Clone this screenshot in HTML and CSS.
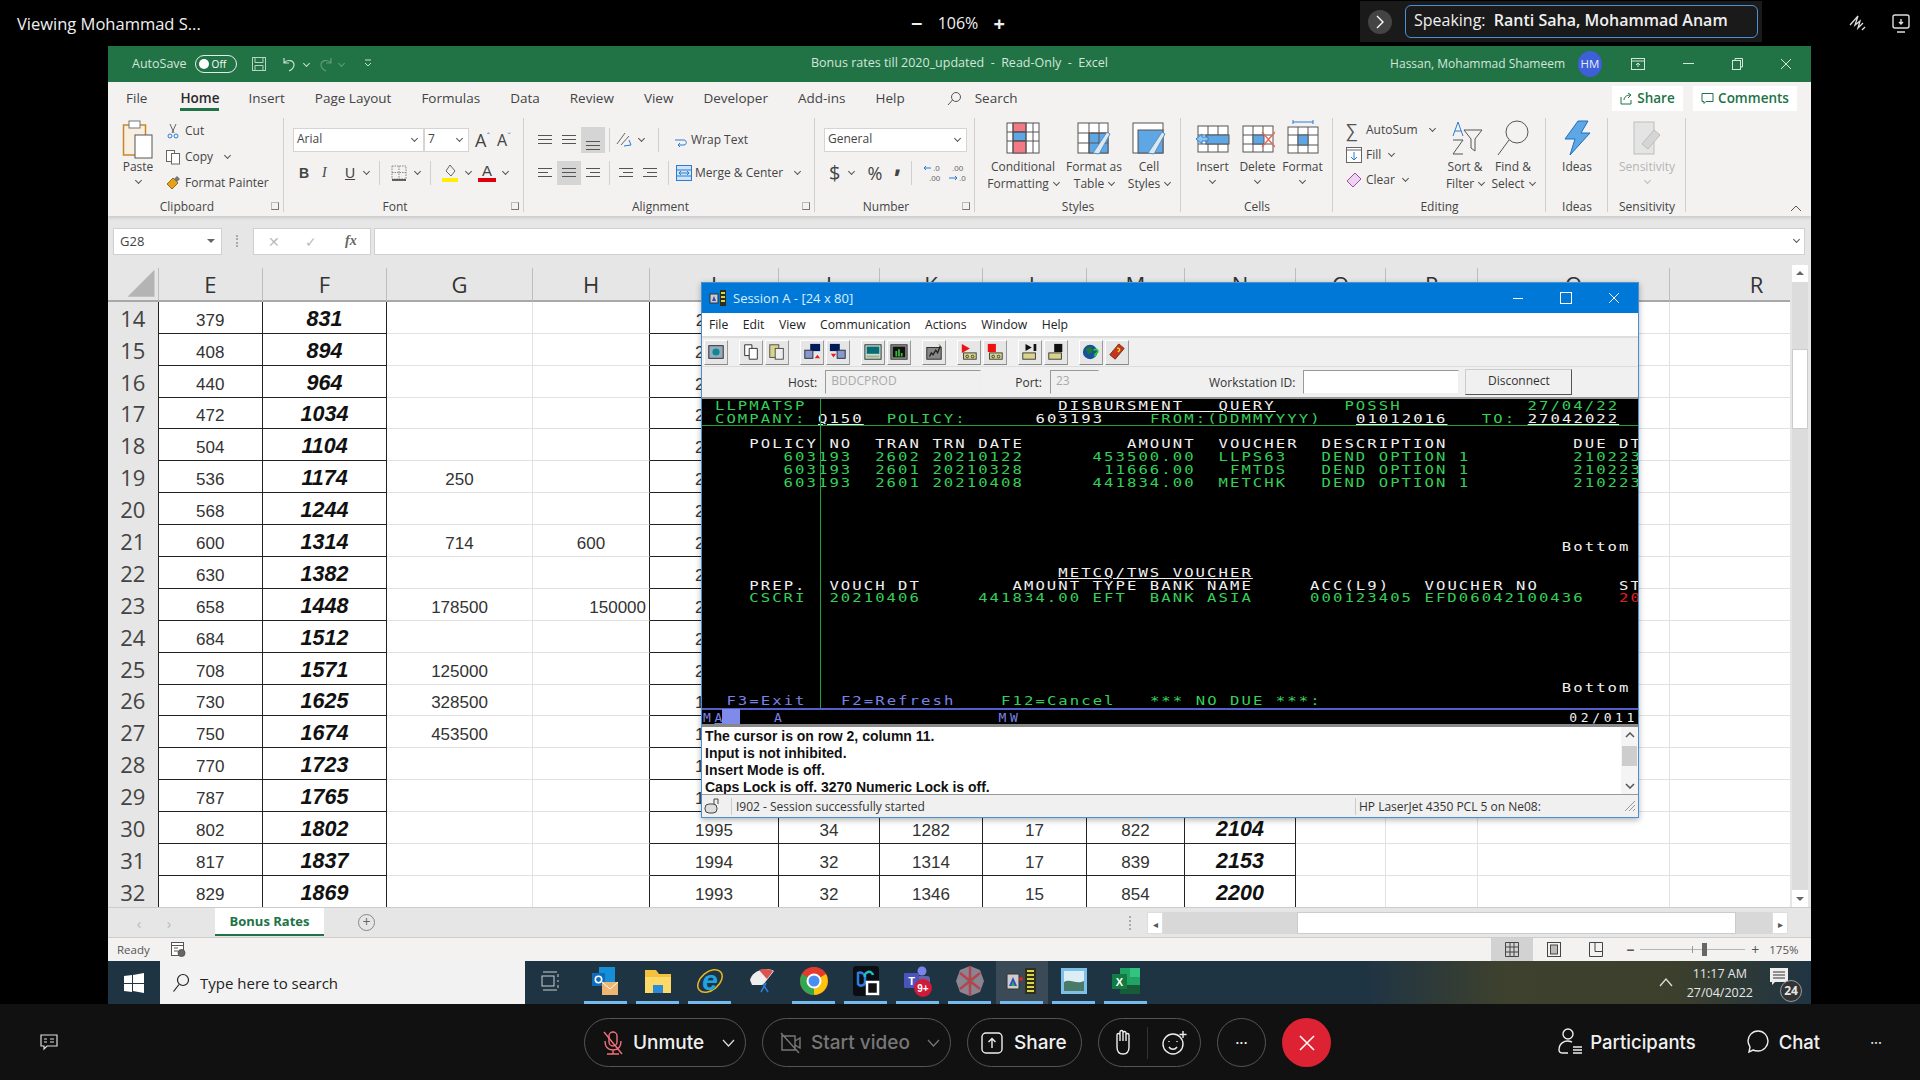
FILE: index.html
```html
<!DOCTYPE html>
<html lang="en">
<head>
  <meta charset="UTF-8" />
  <title>Meeting</title>
  <link rel="stylesheet" href="styles.css">
</head>
<body>
  <header class="top-bar">
    <div class="viewing">Viewing Mohammad S...</div>
    <div class="zoom-ctl"><span class="zoom-btn">−</span><span>106%</span><span class="zoom-btn">+</span></div>
    <div class="speaking">
      <span class="speak-arrow"><svg width="10" height="14" viewBox="0 0 10 14"><path d="M2 1l6 6-6 6" fill="none" stroke="#fff" stroke-width="1.4"/></svg></span>
      <div class="speak-box">Speaking:&nbsp; <b>Ranti Saha, Mohammad Anam</b></div>
    </div>
    <div class="top-icons">
      <svg width="22" height="22" viewBox="0 0 22 22" fill="none" stroke="#ddd" stroke-width="1.3"><path d="M3 13l8-9-3 9 5-4-2 7 5-5M15 18l3-3"/></svg>
      <svg width="20" height="22" viewBox="0 0 20 22" fill="none" stroke="#ddd" stroke-width="1.4"><rect x="2" y="3" width="16" height="13" rx="2"/><path d="M6 20h8M10 7v5M8 10l2 2 2-2"/></svg>
    </div>
  </header>

  <div class="stage">
    <main class="excel">
      <div class="title-bar">
        <div class="qat">
          <span>AutoSave</span>
          <span class="toggle"><i></i>Off</span>
          <svg width="16" height="16" viewBox="0 0 16 16" fill="none" stroke="#b5d3c1"><rect x="1.5" y="1.5" width="13" height="13"/><path d="M4 1.5v5h8v-5M4 14.500v-5h8v5"/></svg>
          <svg class="undo" width="16" height="16" viewBox="0 0 16 16" fill="none" stroke="#c9e0d2" stroke-width="1.2"><path d="M2 2v5h5M2 7c3-4 10-3 10 2 0 3-3 5-5 6"/></svg>
          <i class="chev light"></i>
          <svg class="redo" width="16" height="16" viewBox="0 0 16 16" fill="none" stroke="#5f9c78" stroke-width="1.2"><path d="M14 2v5H9M14 7c-3-4-10-3-10 2 0 3 3 5 5 6"/></svg>
          <i class="chev dim"></i>
          <svg class="custom" width="8" height="10" viewBox="0 0 8 10" fill="none" stroke="#c9e0d2"><path d="M1 1h6M1 4l3 3 3-3"/></svg>
        </div>
        <div class="doc-title">Bonus rates till 2020_updated&nbsp; -&nbsp; Read-Only&nbsp; -&nbsp; Excel</div>
        <div class="win-right">
          <span>Hassan, Mohammad Shameem</span>
          <span class="avatar">HM</span>
          <svg class="w-ribbon" width="14" height="12" viewBox="0 0 14 12" fill="none" stroke="#d5e6db"><rect x=".5" y=".5" width="13" height="11"/><path d="M1 3h12M7 9V5M5 7l2-2 2 2"/></svg>
          <span class="w-min"></span>
          <svg class="w-rest" width="11" height="12" viewBox="0 0 11 12" fill="none" stroke="#d5e6db"><rect x=".5" y="2.500" width="8" height="9"/><path d="M3 2V.5h7.500V9H9"/></svg>
          <svg class="w-close" width="12" height="12" viewBox="0 0 12 12" stroke="#d5e6db"><path d="M1 1l10 10M11 1L1 11"/></svg>
        </div>
      </div>

      <nav class="tabs">
        <span>File</span><span class="tab-on">Home</span><span>Insert</span><span>Page Layout</span><span>Formulas</span><span>Data</span><span>Review</span><span>View</span><span>Developer</span><span>Add-ins</span><span>Help</span>
        <span class="tab-search"><svg width="15" height="15" viewBox="0 0 15 15" fill="none" stroke="#555"><circle cx="9" cy="6" r="4.500"/><path d="M5.500 9L1 14"/></svg>Search</span>
        <span class="share-btns">
          <span class="share-btn"><svg width="13" height="13" viewBox="0 0 13 13" fill="none" stroke="#217346"><path d="M1 5v7h10V8M4 8c0-3 3-5 6-5M8 1l3 2-3 3"/></svg>Share</span>
          <span class="share-btn comments"><svg width="13" height="13" viewBox="0 0 13 13" fill="none" stroke="#217346"><path d="M1 1.500h11v8H5l-2 2v-2H1z"/></svg>Comments</span>
        </span>
      </nav>

      <section class="ribbon">
        <div class="group g-clip">
          <div class="body">
            <div class="big paste">
              <svg width="32" height="40" viewBox="0 0 32 40" fill="none"><rect x="1.500" y="6" width="22" height="30" fill="#f8efe0" stroke="#c8862c" stroke-width="1.500"/><rect x="7" y="2" width="11" height="7" fill="#fff" stroke="#777"/><rect x="13" y="16" width="17" height="23" fill="#fff" stroke="#555"/></svg>
              <span>Paste</span><i class="chev"></i>
            </div>
            <div class="rows">
              <div class="rb"><svg width="16" height="16" viewBox="0 0 16 16" fill="none" stroke="#666"><path d="M5 1l4 9M11 1L7 10"/><circle cx="5" cy="13" r="2" stroke="#2b7cd3"/><circle cx="11" cy="13" r="2" stroke="#2b7cd3"/></svg>Cut</div>
              <div class="rb"><svg width="16" height="16" viewBox="0 0 16 16" fill="#fff" stroke="#666"><rect x="1.500" y="1.500" width="8" height="11"/><rect x="6.500" y="4.500" width="8" height="10.500"/></svg>Copy<i class="chev"></i></div>
              <div class="rb"><svg width="16" height="16" viewBox="0 0 16 16"><path d="M2 9l6-6 5 5-6 6z" fill="#e3a21a" stroke="#9a6a10"/><path d="M9 4l3-3 3 3-3 3z" fill="#777"/></svg>Format Painter</div>
            </div>
          </div>
          <div class="label launched">Clipboard<i class="launch"></i></div>
        </div>

        <div class="group g-font">
          <div class="body">
            <div class="rows tight">
              <div class="line">
                <span class="combo c-font">Arial<i class="chev"></i></span><span class="combo c-size">7<i class="chev"></i></span>
                <span class="bigA">A<sup>ˆ</sup></span><span class="bigA small">A<sup>ˇ</sup></span>
              </div>
              <div class="line fmt">
                <b class="fi">B</b><em class="fi serif">I</em><u class="fi">U</u><i class="chev"></i>
                <span class="sep"></span>
                <svg class="fi" width="18" height="18" viewBox="0 0 18 18" fill="none" stroke="#888" stroke-dasharray="1.500 1"><rect x="2" y="2" width="14" height="13"/><path d="M9 2v13M2 8.500h14"/><path d="M2 16h14" stroke="#333" stroke-dasharray="0" stroke-width="1.500"/></svg><i class="chev"></i>
                <span class="sep"></span>
                <svg class="fi" width="18" height="20" viewBox="0 0 18 20"><path d="M9 2l5 6-4 5-5-5z" fill="none" stroke="#666"/><rect x="1" y="15" width="16" height="4" fill="#ffef00"/></svg><i class="chev"></i>
                <span class="colour"><span>A</span><i></i></span><i class="chev"></i>
              </div>
            </div>
          </div>
          <div class="label launched">Font<i class="launch"></i></div>
        </div>

        <div class="group g-align">
          <div class="body">
            <div class="rows tight">
              <div class="line">
                <span class="al"><s></s><s></s><s></s></span><span class="al"><s></s><s></s><s></s></span><span class="al on low"><s></s><s></s><s></s></span>
                <span class="sep"></span>
                <svg class="orient" width="20" height="20" viewBox="0 0 20 20" fill="none" stroke="#666"><path d="M3 14L11 3M7 15l8-9"/><path d="M10 16l7-1-2-5" stroke="#2b7cd3"/></svg><i class="chev"></i>
                <span class="sep s2"></span>
                <span class="wrap"><svg width="14" height="18" viewBox="0 0 14 18" fill="none" stroke="#2b7cd3"><path d="M1 9h9c3 0 3 5 0 5H4M6 12l-2 2 2 2"/></svg>Wrap Text</span>
              </div>
              <div class="line">
                <span class="al left"><s></s><s></s><s></s></span><span class="al on"><s></s><s></s><s></s></span><span class="al right"><s></s><s></s><s></s></span>
                <span class="sep"></span>
                <span class="al ind"><s></s><s></s><s></s></span><span class="al ind"><s></s><s></s><s></s></span>
                <span class="sep s3"></span>
                <span class="wrap"><svg width="16" height="18" viewBox="0 0 16 18" fill="#cfe3f6" stroke="#2b7cd3"><rect x=".5" y="1.500" width="15" height="15"/><path d="M.5 6h15M.5 12h15M3 9h10M3 9l2-2M3 9l2 2M13 9l-2-2M13 9l-2 2"/></svg>Merge &amp; Center<i class="chev"></i></span>
              </div>
            </div>
          </div>
          <div class="label launched">Alignment<i class="launch"></i></div>
        </div>

        <div class="group g-num">
          <div class="body">
            <div class="rows tight">
              <div class="line"><span class="combo c-gen">General<i class="chev"></i></span></div>
              <div class="line numfmt">
                <span class="sym">$</span><i class="chev"></i><span class="sym pct">%</span><span class="sym comma">,</span>
                <span class="sep"></span>
                <svg width="20" height="20" viewBox="0 0 20 20" fill="none" stroke="#2b7cd3"><path d="M8 5H1M3 3L1 5l2 2"/><text x="10" y="8" class="dec">.0</text><text x="6" y="18" class="dec">.00</text></svg>
                <svg width="20" height="20" viewBox="0 0 20 20" fill="none" stroke="#2b7cd3"><text x="4" y="8" class="dec">.00</text><path d="M1 15h8M7 13l2 2-2 2"/><text x="11" y="18" class="dec">.0</text></svg>
              </div>
            </div>
          </div>
          <div class="label launched">Number<i class="launch"></i></div>
        </div>

        <div class="group g-styles">
          <div class="body">
            <div class="big b-cond">
              <svg class="ic" width="34" height="36" viewBox="0 0 34 36" fill="#fff" stroke="#555"><rect x="1" y="3" width="32" height="30"/><rect x="7" y="3" width="13" height="9" fill="#f37a84"/><rect x="7" y="12" width="13" height="9" fill="#5ea6e4"/><rect x="7" y="21" width="13" height="12" fill="#f37a84"/><path d="M1 12h32M1 21h32M20 3v30M27 3v30M7 3v30" fill="none"/></svg>
              <span>Conditional</span><span class="sub">Formatting<i class="chev"></i></span>
            </div>
            <div class="big b-tbl">
              <svg class="ic" width="34" height="36" viewBox="0 0 34 36" fill="#fff" stroke="#555"><rect x="1" y="3" width="30" height="30"/><rect x="12" y="13" width="19" height="20" fill="#5ea6e4"/><path d="M1 13h30M1 23h30M12 3v30M22 3v30" fill="none"/><path d="M16 33L30 12l3 2-11 20z" fill="#d9e8f5" stroke="#5b8fb8"/></svg>
              <span>Format as</span><span class="sub">Table<i class="chev"></i></span>
            </div>
            <div class="big b-cell">
              <svg class="ic" width="34" height="36" viewBox="0 0 34 36" fill="#fff" stroke="#555"><rect x="1" y="3" width="30" height="30"/><rect x="6" y="10" width="25" height="23" fill="#5ea6e4"/><path d="M16 33L30 12l3 2-11 20z" fill="#d9e8f5" stroke="#5b8fb8"/></svg>
              <span>Cell</span><span class="sub">Styles<i class="chev"></i></span>
            </div>
          </div>
          <div class="label">Styles</div>
        </div>

        <div class="group g-cells">
          <div class="body">
            <div class="big">
              <svg class="ic" width="34" height="36" viewBox="0 0 34 36" fill="#fff" stroke="#555"><rect x="2" y="6" width="30" height="26"/><path d="M2 15h30M2 24h30M12 6v26M22 6v26" fill="none"/><rect x="10" y="15" width="23" height="9" fill="#5ea6e4"/><path d="M0 19l6-5v3h6v4H6v3z" fill="#8cc4f0" stroke="#2b7cd3"/></svg>
              <span>Insert</span><i class="chev"></i>
            </div>
            <div class="big">
              <svg class="ic" width="34" height="36" viewBox="0 0 34 36" fill="#fff" stroke="#555"><rect x="2" y="6" width="30" height="26"/><path d="M2 15h30M2 24h30M12 6v26M22 6v26" fill="none"/><rect x="12" y="15" width="11" height="9" fill="#5ea6e4"/><path d="M21 12l13 15M34 12L21 27" stroke="#e86a5d" stroke-width="1.500"/></svg>
              <span>Delete</span><i class="chev"></i>
            </div>
            <div class="big">
              <svg class="ic" width="34" height="36" viewBox="0 0 34 36" fill="#fff" stroke="#555"><path d="M7 2h20M7 0v4M27 0v4" stroke="#2b7cd3"/><rect x="2" y="7" width="30" height="26"/><path d="M2 15h30M2 25h30M12 7v26M22 7v26" fill="none"/><rect x="12" y="15" width="10" height="10" fill="#5ea6e4"/></svg>
              <span>Format</span><i class="chev"></i>
            </div>
          </div>
          <div class="label">Cells</div>
        </div>

        <div class="group g-edit">
          <div class="body">
            <div class="rows wide">
              <div class="rb"><span class="sum">∑</span>AutoSum<i class="chev"></i></div>
              <div class="rb"><svg width="16" height="18" viewBox="0 0 16 18" fill="#fff" stroke="#666"><rect x=".5" y="1.500" width="15" height="15"/><path d="M.5 4h15" fill="none"/><path d="M8 6v8M5 11l3 3 3-3" fill="none" stroke="#2b7cd3"/></svg>Fill<i class="chev"></i></div>
              <div class="rb"><svg width="16" height="18" viewBox="0 0 16 18" fill="#ecd4f0" stroke="#a24ab0"><path d="M1 10l8-8 6 6-8 8z"/></svg>Clear<i class="chev"></i></div>
            </div>
            <div class="big b-sort">
              <svg class="ic" width="36" height="36" viewBox="0 0 36 36" fill="none" stroke="#555"><path d="M11 2l-5 14M11 2l5 14M8 11h6" stroke="#2b7cd3"/><path d="M6 20h10L6 34h10"/><path d="M17 10h18l-7 9v12l-4-3v-9z"/></svg>
              <span>Sort &amp;</span><span class="sub">Filter<i class="chev"></i></span>
            </div>
            <div class="big b-find">
              <svg class="ic" width="36" height="38" viewBox="0 0 36 38" fill="none" stroke="#555"><circle cx="22" cy="13" r="11"/><path d="M14 21L3 36"/></svg>
              <span>Find &amp;</span><span class="sub">Select<i class="chev"></i></span>
            </div>
          </div>
          <div class="label">Editing</div>
        </div>

        <div class="group g-ideas">
          <div class="body">
            <div class="big">
              <svg class="ic" width="28" height="36" viewBox="0 0 28 36" fill="#5ea6e4" stroke="#1f6fc0"><path d="M15 1h10l-7 12h9L7 35l5-16H2z"/></svg>
              <span>Ideas</span>
            </div>
          </div>
          <div class="label">Ideas</div>
        </div>

        <div class="group g-sens">
          <div class="body">
            <div class="big muted">
              <svg class="ic" width="30" height="36" viewBox="0 0 30 36" fill="#e4e4e4" stroke="#bdbdbd"><rect x="2" y="2" width="20" height="32"/><path d="M10 24l12-14 6 5-12 14z" fill="#d5d5d5"/></svg>
              <span>Sensitivity</span><i class="chev"></i>
            </div>
          </div>
          <div class="label">Sensitivity</div>
        </div>
        <svg class="collapse" width="12" height="7" viewBox="0 0 12 7" fill="none" stroke="#555"><path d="M1 6l5-5 5 5"/></svg>
      </section>

      <div class="formula-bar">
        <div class="namebox">G28<span class="tri"></span></div>
        <span class="grip"></span>
        <div class="fx-btns"><span class="fx-x">✕</span><span class="fx-x">✓</span><em>fx</em></div>
        <div class="fx-input"><i class="chev"></i></div>
      </div>

      <div class="sheet">
        <div class="grid-wrap">
        <table class="grid">
          <colgroup>
            <col class="c0"><col class="c-e"><col class="c-f"><col class="c-g"><col class="c-h"><col class="c-i"><col class="c-j"><col class="c-k"><col class="c-l"><col class="c-m"><col class="c-n"><col class="c-o"><col class="c-p"><col class="c-q"><col class="c-r">
          </colgroup>
          <thead>
            <tr><th class="corner"><span></span></th><th>E</th><th>F</th><th>G</th><th>H</th><th>I</th><th>J</th><th>K</th><th>L</th><th>M</th><th>N</th><th>O</th><th>P</th><th>Q</th><th>R</th></tr>
          </thead>
          <tbody>
            <tr><th>14</th><td>379</td><td>831</td><td></td><td></td><td>2011</td><td></td><td></td><td></td><td></td><td></td><td></td><td></td><td></td><td></td></tr>
            <tr><th>15</th><td>408</td><td>894</td><td></td><td></td><td>2010</td><td></td><td></td><td></td><td></td><td></td><td></td><td></td><td></td><td></td></tr>
            <tr><th>16</th><td>440</td><td>964</td><td></td><td></td><td>2009</td><td></td><td></td><td></td><td></td><td></td><td></td><td></td><td></td><td></td></tr>
            <tr><th>17</th><td>472</td><td>1034</td><td></td><td></td><td>2008</td><td></td><td></td><td></td><td></td><td></td><td></td><td></td><td></td><td></td></tr>
            <tr><th>18</th><td>504</td><td>1104</td><td></td><td></td><td>2007</td><td></td><td></td><td></td><td></td><td></td><td></td><td></td><td></td><td></td></tr>
            <tr><th>19</th><td>536</td><td>1174</td><td>250</td><td></td><td>2006</td><td></td><td></td><td></td><td></td><td></td><td></td><td></td><td></td><td></td></tr>
            <tr><th>20</th><td>568</td><td>1244</td><td></td><td></td><td>2005</td><td></td><td></td><td></td><td></td><td></td><td></td><td></td><td></td><td></td></tr>
            <tr><th>21</th><td>600</td><td>1314</td><td>714</td><td>600</td><td>2004</td><td></td><td></td><td></td><td></td><td></td><td></td><td></td><td></td><td></td></tr>
            <tr><th>22</th><td>630</td><td>1382</td><td></td><td></td><td>2003</td><td></td><td></td><td></td><td></td><td></td><td></td><td></td><td></td><td></td></tr>
            <tr><th>23</th><td>658</td><td>1448</td><td>178500</td><td class="num-r">150000</td><td>2002</td><td></td><td></td><td></td><td></td><td></td><td></td><td></td><td></td><td></td></tr>
            <tr><th>24</th><td>684</td><td>1512</td><td></td><td></td><td>2001</td><td></td><td></td><td></td><td></td><td></td><td></td><td></td><td></td><td></td></tr>
            <tr><th>25</th><td>708</td><td>1571</td><td>125000</td><td></td><td>2000</td><td></td><td></td><td></td><td></td><td></td><td></td><td></td><td></td><td></td></tr>
            <tr><th>26</th><td>730</td><td>1625</td><td>328500</td><td></td><td>1999</td><td></td><td></td><td></td><td></td><td></td><td></td><td></td><td></td><td></td></tr>
            <tr><th>27</th><td>750</td><td>1674</td><td>453500</td><td></td><td>1998</td><td></td><td></td><td></td><td></td><td></td><td></td><td></td><td></td><td></td></tr>
            <tr><th>28</th><td>770</td><td>1723</td><td></td><td></td><td>1997</td><td></td><td></td><td></td><td></td><td></td><td></td><td></td><td></td><td></td></tr>
            <tr><th>29</th><td>787</td><td>1765</td><td></td><td></td><td>1996</td><td></td><td></td><td></td><td></td><td></td><td></td><td></td><td></td><td></td></tr>
            <tr><th>30</th><td>802</td><td>1802</td><td></td><td></td><td>1995</td><td>34</td><td>1282</td><td>17</td><td>822</td><td>2104</td><td></td><td></td><td></td><td></td></tr>
            <tr><th>31</th><td>817</td><td>1837</td><td></td><td></td><td>1994</td><td>32</td><td>1314</td><td>17</td><td>839</td><td>2153</td><td></td><td></td><td></td><td></td></tr>
            <tr><th>32</th><td>829</td><td>1869</td><td></td><td></td><td>1993</td><td>32</td><td>1346</td><td>15</td><td>854</td><td>2200</td><td></td><td></td><td></td><td></td></tr>
          </tbody>
        </table>
        </div>
        <div class="vscroll">
          <span class="sb-btn"><span class="up"></span></span>
          <span class="sb-track"><span class="sb-thumb"></span></span>
          <span class="sb-btn"><span class="down"></span></span>
        </div>
      </div>

      <div class="sheet-tabs">
        <span class="arrow">‹</span><span class="arrow">›</span>
        <span class="sheet-tab">Bonus Rates</span>
        <span class="add-sheet">+</span>
        <span class="dots"></span>
        <span class="hs-btn">◂</span>
        <span class="hs-track"><span class="hs-thumb"></span></span>
        <span class="hs-btn">▸</span>
      </div>

      <div class="status-bar">
        <span>Ready</span>
        <svg class="macro" width="15" height="16" viewBox="0 0 15 16" fill="#fff" stroke="#555"><rect x=".5" y=".5" width="12" height="13"/><path d="M.5 3.500h12M3 6h4M3 9h4" fill="none"/><circle cx="10.500" cy="11" r="3.500" fill="#666"/></svg>
        <span class="views">
          <span class="view on"><svg width="14" height="15" viewBox="0 0 14 15" fill="none" stroke="#444"><path d="M.5.5h13v14H.5zM5 .5v14M9 .5v14M.5 5h13M.5 10h13"/></svg></span>
          <span class="view"><svg width="14" height="15" viewBox="0 0 14 15" fill="none" stroke="#444"><rect x=".5" y=".5" width="13" height="14"/><rect x="3.500" y="3" width="7" height="9" fill="#bbb"/></svg></span>
          <span class="view"><svg width="14" height="15" viewBox="0 0 14 15" fill="none" stroke="#444"><path d="M.5.5h13v14H.5zM6 .5v9H13"/></svg></span>
        </span>
        <span class="zoom-minus">−</span>
        <span class="slider"><i class="tick"></i><i class="knob"></i></span>
        <span class="zoom-plus">+</span>
        <span class="pct-text">175%</span>
      </div>

      <div class="taskbar">
        <svg class="win-logo" width="20" height="20" viewBox="0 0 20 20" fill="#fff"><path d="M0 3l8-1v8H0zM9 2l11-2v10H9zM0 11h8v8l-8-1zM9 11h11v9l-11-2z"/></svg>
        <div class="search"><svg width="18" height="20" viewBox="0 0 18 20" fill="none" stroke="#222" stroke-width="1.200"><circle cx="11" cy="7" r="5.500"/><path d="M7 11.500L1.500 18.500"/></svg>Type here to search</div>
        <span class="slot"><svg width="20" height="22" viewBox="0 0 20 22" fill="none" stroke="#ccc"><path d="M3 2h14M3 20h14"/><rect x="2" y="6" width="12" height="10"/><path d="M18 4v3M18 10v2M18 15v3"/></svg></span>
        <span class="slot run"><svg width="30" height="32" viewBox="0 0 30 32"><rect x="8" y="2" width="16" height="18" fill="#1590d8"/><rect x="1" y="8" width="13" height="13" fill="#0f6cbd"/><circle cx="7.500" cy="14.500" r="3.200" fill="none" stroke="#fff" stroke-width="1.600"/><rect x="11" y="17" width="16" height="13" fill="#eeb672"/><path d="M11 17l8 7 8-7" fill="none" stroke="#fff"/></svg></span>
        <span class="slot run"><svg width="28" height="26" viewBox="0 0 28 26"><path d="M1 2h11l3 4h12v19H1z" fill="#f4c13e"/><path d="M1 9h26v16H1z" fill="#fcd968"/><rect x="9" y="17" width="10" height="8" fill="#2d8cd8"/></svg></span>
        <span class="slot run"><svg width="30" height="32" viewBox="0 0 30 32"><ellipse cx="15" cy="16" rx="14" ry="9" transform="rotate(-40 15 16)" fill="none" stroke="#e8b923" stroke-width="1.500"/><text x="15" y="25" text-anchor="middle" class="ie-e">e</text></svg></span>
        <span class="slot"><svg width="30" height="30" viewBox="0 0 30 30"><path d="M3 14C5 5 18 0 27 5L16 19 5 19z" fill="#eee"/><path d="M12 4c6-2 11-1 14 1L20 13z" fill="#d9534f"/><path d="M16 18l5 8M19 17l-5 9" stroke="#2b7cd3" stroke-width="1.600"/></svg></span>
        <span class="slot run"><svg width="28" height="28" viewBox="0 0 28 28"><circle cx="14" cy="14" r="14" fill="#e33b2e"/><path d="M14 14L2 7a14 14 0 0 1 24 0z" fill="#e33b2e"/><path d="M14 14l12-7a14 14 0 0 1-12 21z" fill="#f9c60d"/><path d="M14 14v14A14 14 0 0 1 2 7z" fill="#2fa84f"/><circle cx="14" cy="14" r="6.500" fill="#4a8df0" stroke="#fff" stroke-width="2"/></svg></span>
        <span class="slot run"><svg width="28" height="32" viewBox="0 0 28 32"><rect x="1" y="1" width="26" height="30" rx="3" fill="#0a0e12"/><path d="M6 8a5 5 0 0 1 7 4v6a4 4 0 0 1-7 1z" fill="none" stroke="#2a7de1" stroke-width="2.500"/><path d="M13 12a4 4 0 0 1 8-2" fill="none" stroke="#1fc0c8" stroke-width="2.500"/><rect x="15" y="17" width="11" height="12" fill="#111" stroke="#fff" stroke-width="2.500"/></svg></span>
        <span class="slot run teams"><svg width="30" height="32" viewBox="0 0 30 32"><circle cx="19" cy="6" r="4.500" fill="#7b83eb"/><rect x="12" y="11" width="15" height="13" rx="3" fill="#6264a7"/><rect x="1" y="8" width="15" height="15" rx="1" fill="#4b53bc"/><text x="8.500" y="20" text-anchor="middle" class="t-t">T</text><circle cx="20" cy="23" r="9" fill="#d01a39"/><text x="20" y="27" text-anchor="middle" class="t-n">9+</text></svg></span>
        <span class="slot run"><svg width="30" height="32" viewBox="0 0 30 32"><path d="M15 1l10 4 4 11-4 11-10 4-10-4-4-11 4-11z" fill="#8a8590"/><circle cx="15" cy="16" r="5" fill="#5d9a80"/><path d="M5 8l20 16M25 8L5 24M15 1v30" stroke="#b8434f" stroke-width="2.500"/></svg></span>
        <span class="slot run active"><svg width="32" height="28" viewBox="0 0 32 28"><rect x="1" y="7" width="12" height="15" rx="1" fill="#ccc" stroke="#333"/><path d="M3 19l4-9 4 9z" fill="#3547c8"/><path d="M5 19l2-5 2 5z" fill="#2fa84f"/><circle cx="15" cy="12" r="2" fill="#d22"/><rect x="19" y="1" width="11" height="26" fill="#2e2e1a"/><path d="M21 4h7M21 8h7M21 12h7M21 16h7M21 20h7M21 24h7" stroke="#d7d54a" stroke-width="2"/></svg></span>
        <span class="slot run"><svg width="28" height="28" viewBox="0 0 28 28"><rect x="1" y="1" width="26" height="26" fill="#7dc0ea"/><rect x="4" y="4" width="20" height="20" fill="#dceef3"/><path d="M4 15c6-4 12 3 20-1v10H4z" fill="#4a7a6a"/></svg></span>
        <span class="slot run"><svg width="30" height="28" viewBox="0 0 30 28"><rect x="9" y="1" width="20" height="26" fill="#21a366"/><rect x="19" y="1" width="10" height="9" fill="#33c481"/><rect x="9" y="18" width="20" height="9" fill="#185c37"/><rect x="1" y="7" width="15" height="15" fill="#107c41"/><text x="8.500" y="19" text-anchor="middle" class="t-t">X</text></svg></span>
        <span class="tray">
          <svg width="14" height="9" viewBox="0 0 14 9" fill="none" stroke="#ddd" stroke-width="1.300"><path d="M1 8l6-7 6 7"/></svg>
          <span class="clock"><span>11:17 AM</span><span>27/04/2022</span></span>
          <span class="notify"><svg width="20" height="20" viewBox="0 0 20 20" fill="#eee"><path d="M1 1h18v14H6l-3 3v-3H1z"/><path d="M4 5h12M4 8h12M4 11h12" stroke="#333"/></svg><b>24</b></span>
        </span>
      </div>

      <!-- floating terminal window -->
      <section class="session">
        <div class="s-title">
          <svg width="18" height="18" viewBox="0 0 18 18"><rect x="1" y="5" width="8" height="9" fill="#ccc" stroke="#333"/><path d="M3 12l2-5 2 5z" fill="#3547c8"/><rect x="11" y="1" width="6" height="16" fill="#2e2e1a"/><path d="M12 4h4M12 8h4M12 12h4" stroke="#d7d54a" stroke-width="2"/></svg>
          <span>Session A - [24 x 80]</span>
          <span class="s-ctl">
            <svg width="12" height="12" viewBox="0 0 12 12" stroke="#fff"><path d="M1 6.500h10"/></svg>
            <svg width="12" height="12" viewBox="0 0 12 12" fill="none" stroke="#fff"><rect x=".5" y=".5" width="11" height="11"/></svg>
            <svg width="12" height="12" viewBox="0 0 12 12" stroke="#fff"><path d="M1 1l10 10M11 1L1 11"/></svg>
          </span>
        </div>
        <div class="s-menu"><span>File</span><span>Edit</span><span>View</span><span>Communication</span><span>Actions</span><span>Window</span><span>Help</span></div>
        <div class="s-tools">
          <span class="tb"><svg viewBox="0 0 20 20"><rect x="2" y="3" width="16" height="14" fill="#9ab" stroke="#222"/><circle cx="10" cy="10" r="4" fill="#0a8a96"/></svg></span>
          <span class="tb-gap"></span>
          <span class="tb"><svg viewBox="0 0 20 20" fill="#fff" stroke="#222"><path d="M3 2h8v12H3z"/><path d="M8 6h9v12H8z"/></svg></span>
          <span class="tb"><svg viewBox="0 0 20 20" stroke="#444"><rect x="2" y="2" width="10" height="14" fill="#d9d48a"/><rect x="8" y="6" width="9" height="12" fill="#eee"/></svg></span>
          <span class="tb-gap"></span>
          <span class="tb"><svg viewBox="0 0 20 20"><rect x="8" y="1" width="11" height="8" fill="#001a5c"/><rect x="2" y="8" width="9" height="9" fill="#8899cc" stroke="#223"/><path d="M13 17l3-4 3 4z" fill="#d22"/></svg></span>
          <span class="tb"><svg viewBox="0 0 20 20"><rect x="1" y="1" width="11" height="8" fill="#001a5c"/><rect x="9" y="8" width="9" height="9" fill="#8899cc" stroke="#223"/><path d="M2 12l3 4 3-4z" fill="#d22"/></svg></span>
          <span class="tb-gap"></span>
          <span class="tb"><svg viewBox="0 0 20 20"><rect x="1" y="2" width="18" height="16" fill="#bfe0d0" stroke="#222"/><rect x="3" y="4" width="14" height="8" fill="#0a6a76"/><path d="M3 15h14" stroke="#aa8" stroke-width="2"/></svg></span>
          <span class="tb"><svg viewBox="0 0 20 20"><rect x="1" y="2" width="18" height="16" fill="#999" stroke="#222"/><rect x="3" y="4" width="14" height="12" fill="#111"/><path d="M7 15v-6M10 15V7M13 15v-4" stroke="#3b3" stroke-width="2"/></svg></span>
          <span class="tb-gap"></span>
          <span class="tb"><svg viewBox="0 0 20 20"><rect x="2" y="5" width="16" height="13" fill="#888" stroke="#222"/><path d="M5 15l2-4 2 2 3-5 2 3 3-8" fill="none" stroke="#222" stroke-width="1.500"/><path d="M15 1l3 3" stroke="#b84"/></svg></span>
          <span class="tb-gap"></span>
          <span class="tb"><svg viewBox="0 0 20 20"><path d="M2 1l9 5-9 5z" fill="#e11"/><rect x="4" y="11" width="14" height="7" fill="#d9d48a" stroke="#333"/><circle cx="8" cy="15" r="1.500" fill="none" stroke="#333"/><circle cx="14" cy="15" r="1.500" fill="none" stroke="#333"/></svg></span>
          <span class="tb"><svg viewBox="0 0 20 20"><rect x="2" y="1" width="9" height="9" fill="#e11"/><rect x="4" y="11" width="14" height="7" fill="#d9d48a" stroke="#333"/><circle cx="8" cy="15" r="1.500" fill="none" stroke="#333"/><circle cx="14" cy="15" r="1.500" fill="none" stroke="#333"/></svg></span>
          <span class="tb-gap"></span>
          <span class="tb"><svg viewBox="0 0 20 20"><path d="M5 1l7 4-7 4zM14 1h3v8h-3z" fill="#111"/><rect x="2" y="11" width="14" height="7" fill="#d9d48a" stroke="#333"/></svg></span>
          <span class="tb"><svg viewBox="0 0 20 20"><rect x="8" y="1" width="9" height="9" fill="#111"/><rect x="2" y="11" width="14" height="7" fill="#d9d48a" stroke="#333"/></svg></span>
          <span class="tb-gap"></span>
          <span class="tb"><svg viewBox="0 0 20 20"><circle cx="9" cy="10" r="8" fill="#1a4f9a"/><path d="M4 6l6-2 2 5-5 4z" fill="#1a7a3a"/><path d="M13 8c4-3 7 2 2 4l-1 3" fill="none" stroke="#2c3" stroke-width="2"/></svg></span>
          <span class="tb"><svg viewBox="0 0 20 20"><path d="M2 13L12 1l6 5L8 18z" fill="#c8341f" stroke="#631"/><path d="M10 6a2 2 0 0 1 3 2l-2 2" fill="none" stroke="#fd3" stroke-width="1.500"/></svg></span>
        </div>
        <div class="s-host">
          <label class="lbl-host">Host:</label><span class="field f-host">BDDCPROD</span>
          <label class="lbl-port">Port:</label><span class="field f-port">23</span>
          <label class="lbl-ws">Workstation ID:</label><span class="field f-ws"></span>
          <span class="disconnect">Disconnect</span>
        </div>
        <div class="term">
          <pre class="screen"><span class="g">LLPMATSP</span>                      <u class="w">DISBURSMENT   QUERY</u>      <span class="g">POSSH</span>           <span class="g">27/04/22</span>
<span class="g">COMPANY:</span> <u class="w">Q150</u>  <span class="g">POLICY:</span>      <span class="w">603193</span>    <span class="g">FROM:(DDMMYYYY)</span>   <u class="w">01012016</u>   <span class="g">TO:</span> <u class="w">27042022</u>

   <span class="w">POLICY NO  TRAN TRN DATE         AMOUNT  VOUCHER  DESCRIPTION           DUE DT</span>
<span class="g">      603193  2602 20210122      453500.00  LLPS63   DEND OPTION 1         210223</span>
<span class="g">      603193  2601 20210328       11666.00   FMTDS   DEND OPTION 1         210223</span>
<span class="g">      603193  2601 20210408      441834.00  METCHK   DEND OPTION 1         210223</span>




                                                                          <span class="w">Bottom</span>

                              <u class="w">METCQ/TWS VOUCHER</u>
   <span class="w">PREP.  VOUCH DT        AMOUNT TYPE BANK NAME     ACC(L9)   VOUCHER NO       ST</span>
<span class="g">   CSCRI  20210406     441834.00 EFT  BANK ASIA     000123405 EFD06042100436</span>   <span class="r">20</span>






                                                                          <span class="w">Bottom</span>
 <span class="b">F3=Exit</span>   <span class="b">F2=Refresh</span>    <span class="g">F12=Cancel</span>   <span class="g">*** NO DUE ***:</span></pre>
          <i class="cross-v"></i><i class="cross-h"></i>
        </div>
        <div class="oia">
          <span class="ma">M<u>A</u><i></i></span><span class="oia-a">A</span><span class="oia-mw">MW</span><span class="oia-pos">02/011</span>
        </div>
        <div class="log">
          <div class="log-text">
            <div>The cursor is on row 2, column 11.</div>
            <div>Input is not inhibited.</div>
            <div>Insert Mode is off.</div>
            <div>Caps Lock is off. 3270 Numeric Lock is off.</div>
          </div>
          <div class="log-scroll">
            <svg width="10" height="6" viewBox="0 0 10 6" fill="none" stroke="#555" stroke-width="1.500"><path d="M1 5l4-4 4 4"/></svg>
            <i></i>
            <svg width="10" height="6" viewBox="0 0 10 6" fill="none" stroke="#555" stroke-width="1.500"><path d="M1 1l4 4 4-4"/></svg>
          </div>
        </div>
        <div class="s-status">
          <svg width="24" height="18" viewBox="0 0 24 18" fill="#ddd" stroke="#444"><rect x="2" y="7" width="12" height="9" rx="4"/><path d="M11 7V2h4v5" fill="none"/></svg>
          <span class="st-msg">I902 - Session successfully started</span>
          <span class="st-print">HP LaserJet 4350 PCL 5 on Ne08:</span>
          <svg class="grip-r" width="12" height="12" viewBox="0 0 12 12" stroke="#999"><path d="M1 11L11 1M5 11l6-6M9 11l2-2"/></svg>
        </div>
      </section>
    </main>
  </div>

  <footer class="meeting">
    <svg class="cc" width="20" height="18" viewBox="0 0 20 18" fill="none" stroke="#ddd" stroke-width="1.200"><path d="M2 2h16v11H8l-3 3v-3H2z"/><path d="M5 6h3M5 9h3M11 6h4M11 9h4"/></svg>
    <div class="controls">
      <button class="pill unmute"><svg width="24" height="28" viewBox="0 0 24 28" fill="none" stroke="#f2707c" stroke-width="1.400"><rect x="8" y="3" width="8" height="14" rx="4"/><path d="M4 12c0 6 3 9 8 9s8-3 8-9M12 21v4M6 25h12M3 3l18 22"/></svg>Unmute<svg class="drop" width="13" height="8" viewBox="0 0 13 8" fill="none" stroke="#ddd" stroke-width="1.200"><path d="M1 1l5.500 6L12 1"/></svg></button>
      <button class="pill video"><svg width="24" height="24" viewBox="0 0 24 24" fill="none" stroke="#777" stroke-width="1.400"><path d="M3 5h13v14H3zM16 10l5-3v10l-5-3M2 2l18 20"/></svg>Start video<svg class="drop" width="13" height="8" viewBox="0 0 13 8" fill="none" stroke="#777" stroke-width="1.200"><path d="M1 1l5.500 6L12 1"/></svg></button>
      <button class="pill share"><svg width="22" height="22" viewBox="0 0 22 22" fill="none" stroke="#eee" stroke-width="1.400"><rect x="1" y="1" width="20" height="20" rx="4"/><path d="M11 16V7M7.500 10L11 6.500l3.500 3.500"/></svg>Share</button>
      <div class="pill react">
        <svg width="22" height="28" viewBox="0 0 22 28" fill="none" stroke="#eee" stroke-width="1.400"><path d="M5 13V6a1.500 1.500 0 0 1 3 0v6-9a1.500 1.500 0 0 1 3 0v9-8a1.500 1.500 0 0 1 3 0v8-6a1.500 1.500 0 0 1 3 0v12c0 4-2 7-6 7s-6-3-6-7z"/></svg>
        <span class="divider"></span>
        <svg width="26" height="28" viewBox="0 0 26 28" fill="none" stroke="#eee" stroke-width="1.400"><circle cx="12" cy="15" r="10"/><path d="M8 18c2 3 6 3 8 0M8 12v1M16 12v1M22 2v7M18.500 5.500h7"/></svg>
      </div>
      <button class="pill more">···</button>
      <button class="hangup"><svg width="18" height="18" viewBox="0 0 18 18" stroke="#fff" stroke-width="1.500"><path d="M2 2l14 14M16 2L2 16"/></svg></button>
    </div>
    <div class="side-btns">
      <span class="side"><svg width="26" height="30" viewBox="0 0 26 30" fill="none" stroke="#eee" stroke-width="1.400"><circle cx="11" cy="7" r="5"/><path d="M15 15c-8-3-13 2-13 8 0 2 2 3 4 3h5M16 20h9M16 23h9M16 26h9"/></svg>Participants</span>
      <span class="side chat"><svg width="24" height="26" viewBox="0 0 24 26" fill="none" stroke="#eee" stroke-width="1.400"><path d="M12 2c6 0 10 5 10 10s-4 10-10 10c-2 0-4-.5-5-1l-4 2 1-5c-1-2-2-4-2-6C2 7 6 2 12 2z"/></svg>Chat</span>
      <span class="side more-dots">···</span>
    </div>
  </footer>
</body>
</html>
```

FILE: styles.css
```css
* {
  box-sizing: border-box;
}

body {
  margin: 0;
  width: 1920px;
  height: 1080px;
  overflow: hidden;
  background: #000;
  font-family: "Open Sans", "Noto Sans", sans-serif;
  color: #333;
}

svg {
  display: block;
  flex: none;
}

/* top meeting bar */
.top-bar {
  height: 46px;
  display: flex;
  align-items: center;
  color: #f0f0f0;
  font-size: 16.500px;
}

.viewing {
  width: 902px;
  padding-left: 17px;
}

.zoom-ctl {
  width: 112px;
  display: flex;
  justify-content: space-between;
  align-items: center;
  padding: 0 9px;
  font-size: 16px;
}

.zoom-btn {
  font-size: 20px;
  font-weight: 700;
}

.speaking {
  margin-left: 346px;
  width: 402px;
  height: 41px;
  margin-top: -3px;
  background: #1a1a1a;
  display: flex;
  align-items: center;
  padding: 0 4px 0 8px;
}

.speak-arrow {
  width: 24px;
  height: 24px;
  border-radius: 50%;
  background: #444;
  display: flex;
  align-items: center;
  justify-content: center;
  margin-right: 13px;
}

.speak-box {
  width: 354px;
  height: 33px;
  border: 1.500px solid #4a90d9;
  border-radius: 6px;
  padding-left: 8px;
  line-height: 29px;
  font-size: 16px;
  white-space: nowrap;
}

.speak-box b {
  font-weight: 600;
}

.top-icons {
  display: flex;
  gap: 22px;
  margin-left: 85px;
}

/* excel */
.stage {
  padding-left: 108px;
  height: 958px;
}

.excel {
  position: relative;
  width: 1703px;
  height: 958px;
  background: #e6e6e6;
  display: flex;
  flex-direction: column;
}

.title-bar {
  height: 36px;
  background: #217346;
  color: #d3e6da;
  font-size: 12.500px;
  display: grid;
  grid-template-columns: 1fr auto 1fr;
  align-items: center;
}

.qat {
  display: flex;
  align-items: center;
  padding-left: 24px;
}

.toggle {
  width: 42px;
  height: 18px;
  margin: 0 14.500px 0 8px;
  border: 1.500px solid #e6f0ea;
  border-radius: 9px;
  font-size: 10px;
  display: flex;
  align-items: center;
  gap: 3px;
  padding-left: 3px;
  color: #fff;
}

.toggle i {
  width: 10px;
  height: 10px;
  border-radius: 50%;
  background: #fff;
}

.undo {
  margin-left: 15px;
}

.redo {
  margin-left: 8px;
}

.custom {
  margin-left: 20px;
}

.chev {
  display: inline-block;
  width: 5px;
  height: 5px;
  border-right: 1px solid #555;
  border-bottom: 1px solid #555;
  transform: rotate(45deg);
  flex: none;
}

.chev.light {
  border-color: #c9e0d2;
  margin-left: 6px;
}

.chev.dim {
  border-color: #5f9c78;
  margin-left: 6px;
}

.doc-title {
  white-space: nowrap;
  margin-top: -2px;
}

.win-right {
  display: flex;
  align-items: center;
  justify-content: flex-end;
  padding-right: 19px;
  white-space: nowrap;
  font-size: 12px;
}

.avatar {
  width: 24px;
  height: 26px;
  border-radius: 50%;
  background: #3d5fd8;
  color: #e6ebff;
  font-size: 11.500px;
  text-align: center;
  line-height: 26px;
  margin-left: 13px;
}

.w-ribbon {
  margin-left: 29px;
}

.w-min {
  width: 11px;
  height: 1px;
  background: #d5e6db;
  margin-left: 38px;
}

.w-rest {
  margin-left: 38px;
}

.w-close {
  margin-left: 37px;
}

.tabs {
  height: 33px;
  background: #f3f2f1;
  display: flex;
  align-items: center;
  gap: 30px;
  padding-left: 18px;
  font-size: 13.500px;
  color: #444;
  white-space: nowrap;
}

.tab-on {
  position: relative;
  margin-left: 3px;
  margin-right: -1px;
  color: #2a2a2a;
  font-weight: 600;
}

.tab-on::after {
  content: "";
  position: absolute;
  left: 0;
  right: 0;
  bottom: -4px;
  height: 3px;
  background: #217346;
}

.tab-search {
  display: flex;
  align-items: center;
  gap: 13px;
  margin-left: 12px;
}

.share-btns {
  margin-left: auto;
  display: flex;
  gap: 10px;
  padding-right: 14px;
}

.share-btn {
  height: 25px;
  width: 71px;
  background: #fff;
  display: flex;
  align-items: center;
  justify-content: center;
  gap: 4px;
  color: #217346;
  font-weight: 600;
}

.share-btn.comments {
  width: 104px;
}

/* ribbon */
.ribbon {
  position: relative;
  height: 101px;
  background: #f3f2f1;
  display: flex;
  font-size: 12px;
  color: #444;
  box-shadow: 0 2px 3px rgba(0, 0, 0, 0.12);
  z-index: 1;
  white-space: nowrap;
}

.group {
  position: relative;
  display: flex;
  flex-direction: column;
  padding-top: 4px;
}

.group::after {
  content: "";
  position: absolute;
  right: 0;
  top: 3px;
  bottom: 4px;
  width: 1px;
  background: #cfcfcf;
}

.g-clip { width: 176px; }
.g-font { width: 240px; }
.g-align { width: 291px; }
.g-num { width: 160px; }
.g-styles { width: 206px; }
.g-cells { width: 152px; }
.g-edit { width: 213px; }
.g-ideas { width: 62px; }
.g-sens { width: 78px; }

.body {
  height: 76px;
  flex: none;
  display: flex;
}

.label {
  height: 21px;
  text-align: center;
  line-height: 24px;
}

.label.launched {
  padding-right: 18px;
}

.launch {
  position: absolute;
  right: 5px;
  bottom: 6px;
  width: 8px;
  height: 8px;
  border: 1px solid #777;
  border-top-color: #bbb;
  border-left-color: #bbb;
}

.big {
  display: flex;
  flex-direction: column;
  align-items: center;
  line-height: 17px;
}

.big .chev {
  margin-top: 3px;
}

.big .ic {
  height: 38px;
  margin-bottom: 1px;
}

.sub .chev {
  margin: 0 0 3px 5px;
}

.paste {
  width: 46px;
  margin-left: 7px;
}

.paste span {
  margin-top: -1px;
}

.rows {
  display: flex;
  flex-direction: column;
}

.g-clip .rows {
  padding: 3px 0 0 4px;
  gap: 8px;
}

.rb {
  display: flex;
  align-items: center;
  gap: 4px;
  height: 18px;
}

.rb .chev {
  margin: 0 0 3px 8px;
}

.tight {
  padding: 9px 0 0 9px;
  gap: 9px;
  width: 100%;
}

.line {
  display: flex;
  align-items: center;
  height: 24px;
}

.combo {
  height: 24px;
  background: #fff;
  border: 1px solid #d4d4d4;
  display: flex;
  align-items: center;
  justify-content: space-between;
  padding: 0 6px 3px 3px;
  font-size: 12px;
  font-family: "Open Sans", sans-serif;
}

.c-font { width: 131px; }
.c-size { width: 45px; margin-right: 6px; }
.c-gen { width: 143px; }

.bigA {
  font-size: 18px;
  width: 18px;
  line-height: 22px;
}

.bigA.small {
  font-size: 16px;
  margin-left: 4px;
}

.bigA sup {
  font-size: 9px;
  line-height: 0;
  color: #2b7cd3;
}

.fmt {
  padding-left: 6px;
}

.fi {
  font-size: 14px;
  font-style: normal;
  width: 23px;
  font-family: "Liberation Sans", sans-serif;
}

em.fi {
  font-style: italic;
  font-family: "Liberation Serif", serif;
}

.fmt u.fi {
  width: 18px;
}

.fmt .chev {
  margin: 0 0 3px 1px;
}

.sep {
  width: 1px;
  height: 24px;
  background: #d0d0d0;
  margin: 0 10px;
  flex: none;
}

.fmt svg {
  width: 18px;
  margin-right: 6px;
}

.colour {
  width: 18px;
  margin: 0 6px 0 7px;
  font-size: 15px;
  font-family: "Liberation Sans", sans-serif;
  text-align: center;
}

.colour span {
  display: block;
  line-height: 14px;
  color: #444;
}

.colour i {
  display: block;
  height: 4px;
  background: #e0000b;
}

/* alignment bars, three little strokes in a cell */
.al {
  width: 24px;
  height: 24px;
  display: flex;
  flex-direction: column;
  justify-content: center;
  gap: 3px;
  padding: 0 5px;
  flex: none;
}

.al.low {
  justify-content: flex-end;
  padding-bottom: 3px;
}

.al.on {
  background: #d5d5d5;
}

.al s {
  display: block;
  height: 1px;
  background: #555;
}

.al.right s:nth-child(2),
.al.ind s:nth-child(2) {
  margin-left: 4px;
}

.al.left s:nth-child(2) {
  margin-right: 4px;
}

.g-align .sep {
  margin: 0 4px;
}

.g-align .sep.s2 {
  margin: 0 15px 0 14px;
}

.g-align .sep.s3 {
  margin: 0 7px 0 6px;
}

.g-align .line:first-child .al {
  height: 26px;
}

.g-align .chev {
  margin: 0 0 3px 5px;
}

.wrap {
  display: flex;
  align-items: center;
  gap: 3px;
}

.wrap .chev {
  margin-left: 9px;
}

.numfmt {
  padding-left: 5px;
}

.sym {
  font-size: 20px;
  color: #444;
  line-height: 24px;
}

.numfmt .chev {
  margin: 0 13px 3px 9px;
}

.pct {
  margin-right: 8px;
  font-size: 18px;
}

.comma {
  font-weight: 800;
  font-size: 22px;
  line-height: 14px;
  margin: 0 0 18px 4px;
}

.numfmt .sep {
  margin: 0 11px 0 10px;
}

.numfmt svg + svg {
  margin-left: 5px;
}

.dec {
  font: 8px "Liberation Sans", sans-serif;
  fill: #666;
  stroke: none;
}

.g-styles .body { padding-left: 11px; }
.b-cond { width: 74px; }
.b-tbl { width: 68px; }
.b-cell { width: 42px; }

.g-cells .body { padding-left: 9px; }
.g-cells .big { width: 45px; }

.wide {
  width: 108px;
  padding: 2px 0 0 13px;
  gap: 7px;
}

.wide .rb:not(:first-child) .chev {
  margin-left: 4px;
}

.sum {
  font-size: 18px;
  line-height: 18px;
  color: #555;
  width: 16px;
}

.b-sort, .b-find {
  width: 48px;
}

.g-ideas .big,
.g-sens .big {
  width: 100%;
}

.muted {
  color: #b5b5b5;
}

.muted .chev {
  border-color: #bbb;
}

.collapse {
  position: absolute;
  right: 9px;
  bottom: 4px;
}

/* formula bar */
.formula-bar {
  height: 44px;
  display: flex;
  align-items: center;
  padding: 7px 6px 0 5px;
  font-size: 13px;
  color: #444;
}

.namebox {
  width: 109px;
  height: 27px;
  background: #fff;
  border: 1px solid #d0d0d0;
  display: flex;
  align-items: center;
  justify-content: space-between;
  padding: 0 6px;
}

.tri {
  width: 0;
  height: 0;
  border: 4px solid transparent;
  border-top-color: #666;
  margin-top: 4px;
}

.grip {
  width: 2px;
  height: 12px;
  border-left: 2px dotted #aaa;
  margin: 0 15px 0 14px;
}

.fx-btns {
  width: 118px;
  height: 27px;
  background: #fff;
  border: 1px solid #d0d0d0;
  display: flex;
  align-items: center;
  gap: 25px;
  padding-left: 14px;
}

.fx-x {
  color: #bbb;
  font-size: 14px;
}

.fx-btns em {
  font-family: "Liberation Serif", serif;
  font-size: 14px;
  font-weight: 700;
  color: #666;
  margin-left: 3px;
}

.fx-input {
  flex: 1;
  height: 27px;
  margin-left: 3px;
  background: #fff;
  border: 1px solid #d0d0d0;
  display: flex;
  align-items: center;
  justify-content: flex-end;
  padding: 0 5px 4px 0;
}

/* sheet */
.sheet {
  display: flex;
  height: 648px;
  overflow: hidden;
  padding-top: 8px;
  background: #e6e6e6;
}

.grid-wrap {
  width: 1682px;
  flex: none;
  overflow: hidden;
}

.grid {
  width: 1736px;
  table-layout: fixed;
  border-collapse: separate;
  border-spacing: 0;
  font-family: "Liberation Sans", sans-serif;
  font-size: 17px;
  color: #333;
  background: #fff;
}

.c0 { width: 50.500px; }
.c-e { width: 104.500px; }
.c-f { width: 124px; }
.c-g { width: 146px; }
.c-h { width: 117px; }
.c-i { width: 129px; }
.c-j { width: 101px; }
.c-k { width: 103px; }
.c-l { width: 104px; }
.c-m { width: 98px; }
.c-n { width: 111px; }
.c-o { width: 90px; }
.c-p { width: 92px; }
.c-q { width: 192px; }
.c-r { width: 174px; }

thead th {
  height: 34px;
  background: #e6e6e6;
  font-family: "Open Sans", sans-serif;
  font-size: 22px;
  font-weight: 400;
  color: #333;
  border-right: 1px solid #bdbdbd;
  border-bottom: 2px solid #a8a8a8;
  padding: 0;
}

.corner {
  position: relative;
}

.corner span {
  position: absolute;
  right: 3px;
  bottom: 3px;
  width: 27px;
  height: 27px;
  background: #b4b4b4;
  clip-path: polygon(100% 0, 100% 100%, 0 100%);
}

tbody tr {
  height: 31.900px;
}

tbody th {
  background: #e6e6e6;
  font-family: "Open Sans", sans-serif;
  font-size: 22px;
  font-weight: 400;
  color: #444;
  padding: 0;
  border-right: 1px solid #222;
}

tbody td {
  padding: 7px 0 0;
  text-align: center;
  border-right: 1px solid #e2e2e2;
  border-bottom: 1px solid #e2e2e2;
  overflow: hidden;
}

/* E, F and the I to N block carry real black borders */
td:nth-child(2),
td:nth-child(3),
td:nth-child(6),
td:nth-child(7),
td:nth-child(8),
td:nth-child(9),
td:nth-child(10),
td:nth-child(11) {
  border-right-color: #222;
  border-bottom-color: #222;
}

td:nth-child(5) {
  border-right-color: #222;
}

td:nth-child(3),
td:nth-child(11) {
  padding-top: 4px;
  font-size: 21.500px;
  font-weight: 700;
  font-style: italic;
  color: #111;
}

td.num-r {
  text-align: right;
  padding-right: 3px;
}

.vscroll {
  width: 21px;
  margin-top: -3px;
  padding-left: 2px;
  display: flex;
  flex-direction: column;
}

.sb-btn {
  height: 17px;
  width: 16px;
  background: #fff;
  display: flex;
  align-items: center;
  justify-content: center;
}

.up, .down {
  width: 0;
  height: 0;
  border: 4px solid transparent;
}

.up {
  border-bottom-color: #666;
  margin-bottom: 4px;
}

.down {
  border-top-color: #666;
  margin-top: 4px;
}

.sb-track {
  flex: 1;
  width: 16px;
  background: #dcdcdc;
  padding-top: 67px;
  margin-bottom: 16px;
}

.sb-thumb {
  display: block;
  height: 80px;
  background: #fff;
  border: 1px solid #ccc;
}

.vscroll .sb-btn:last-child {
  margin-top: -16px;
}

.sheet-tabs {
  height: 31px;
  border-top: 1px solid #ccc;
  border-bottom: 1px solid #ccc;
  background: #e6e6e6;
  display: flex;
  align-items: center;
  color: #bbb;
  font-size: 15px;
}

.arrow {
  width: 30px;
  text-align: center;
}

.arrow:first-child {
  margin-left: 16px;
}

.sheet-tab {
  margin-left: 31px;
  width: 109px;
  height: 28px;
  margin-top: -1px;
  background: #fff;
  border-bottom: 2px solid #217346;
  color: #217346;
  font-size: 13px;
  font-weight: 700;
  text-align: center;
  line-height: 26px;
}

.add-sheet {
  width: 17px;
  height: 17px;
  margin-left: 34px;
  border: 1px solid #888;
  border-radius: 50%;
  color: #666;
  font-size: 14px;
  line-height: 14px;
  text-align: center;
}

.dots {
  width: 2px;
  height: 14px;
  border-left: 2px dotted #aaa;
  margin-left: 754px;
}

.hs-btn {
  width: 16px;
  height: 22px;
  background: #fff;
  color: #555;
  font-size: 10px;
  text-align: center;
  line-height: 22px;
  border: 1px solid #ddd;
}

.dots + .hs-btn {
  margin-left: 16px;
}

.hs-track {
  width: 609px;
  height: 22px;
  background: #d8d8d8;
  padding-left: 134px;
}

.hs-thumb {
  display: block;
  width: 439px;
  height: 22px;
  background: #fff;
  border: 1px solid #ccc;
}

.status-bar {
  height: 23px;
  background: #f3f2f1;
  display: flex;
  align-items: center;
  padding-left: 9px;
  font-size: 11.500px;
  color: #555;
}

.macro {
  margin-left: 21.500px;
}

.views {
  margin-left: 1305px;
  display: flex;
}

.view {
  width: 42px;
  height: 23px;
  display: flex;
  align-items: center;
  justify-content: center;
}

.view.on {
  background: #d2d2d2;
}

.zoom-minus {
  margin-left: 9px;
  font-size: 14px;
  font-weight: 700;
}

.slider {
  position: relative;
  width: 105px;
  height: 1px;
  background: #b5b5b5;
  margin: 0 6px;
}

.tick {
  position: absolute;
  left: 52px;
  top: -3px;
  width: 1px;
  height: 7px;
  background: #999;
}

.knob {
  position: absolute;
  left: 62px;
  top: -6px;
  width: 5px;
  height: 13px;
  background: #666;
}

.zoom-plus {
  font-size: 14px;
}

.pct-text {
  margin-left: 10px;
}

.taskbar {
  flex: 1;
  background: linear-gradient(90deg, #1f3443 0, #1f3443 74%, #3e412d 82%, #3c3f2c 92%, #1f3443 100%);
  display: flex;
  align-items: center;
  color: #eee;
}

.win-logo {
  margin: 0 16px;
}

.search {
  width: 365px;
  height: 100%;
  background: #f2f2f2;
  color: #222;
  font-size: 15px;
  display: flex;
  align-items: center;
  gap: 10px;
  padding-left: 12px;
}

.slot {
  position: relative;
  width: 52px;
  height: 43px;
  display: flex;
  align-items: center;
  justify-content: center;
  padding-bottom: 3px;
}

.search + .slot {
  width: 55px;
  padding-right: 5px;
}

.slot.run::after {
  content: "";
  position: absolute;
  left: 4px;
  right: 5px;
  bottom: 0;
  height: 3px;
  background: #76b9ed;
}

.slot.active {
  background: #3b4a57;
}

.ie-e {
  font: italic 700 28px "Liberation Sans", sans-serif;
  fill: #21a3e0;
}

.t-t {
  font: 700 11px "Liberation Sans", sans-serif;
  fill: #fff;
}

.t-n {
  font: 700 10px "Liberation Sans", sans-serif;
  fill: #fff;
}

.tray {
  margin-left: auto;
  display: flex;
  align-items: center;
  color: #e6e6e6;
  padding-right: 12px;
}

.clock {
  display: flex;
  flex-direction: column;
  align-items: center;
  font-size: 12.500px;
  line-height: 19px;
  margin: 0 16px 0 14px;
}

.notify {
  position: relative;
  width: 30px;
  height: 32px;
}

.notify b {
  position: absolute;
  right: -3px;
  bottom: -3px;
  width: 22px;
  height: 22px;
  border: 1px solid #999;
  border-radius: 50%;
  background: #333;
  font-size: 12px;
  text-align: center;
  line-height: 20px;
}

/* terminal window */
.session {
  position: absolute;
  left: 593px;
  top: 236px;
  width: 938px;
  height: 536px;
  background: #f0f0f0;
  border: 1px solid #4c8fd0;
  box-shadow: 0 2px 6px rgba(0, 0, 0, 0.3);
  display: flex;
  flex-direction: column;
}

.session > * {
  flex: none;
}

.s-title {
  height: 30px;
  background: #0078d7;
  color: #dcefff;
  font-size: 13px;
  display: flex;
  align-items: center;
  gap: 6px;
  padding-left: 7px;
}

.s-ctl {
  margin-left: auto;
  display: flex;
  gap: 36px;
  padding-right: 18px;
}

.s-menu {
  height: 23px;
  background: #fff;
  display: flex;
  align-items: center;
  gap: 14.500px;
  padding-left: 7px;
  font-size: 12.200px;
  color: #222;
}

.s-tools {
  height: 30px;
  border-top: 2px solid #ddd;
  background: #f0f0f0;
  display: flex;
  align-items: center;
  padding-left: 2px;
  gap: 2px;
}

.tb {
  width: 24px;
  height: 25px;
  background: #e6e6e6;
  border: 1px solid;
  border-color: #fff #999 #888 #fff;
  padding: 2px;
}

.tb-gap {
  width: 7px;
}

.s-host {
  height: 33px;
  background: #f0f0f0;
  border-top: 1px solid #ddd;
  border-bottom: 2px solid #999;
  display: flex;
  align-items: center;
  font-size: 12px;
  color: #333;
}

.lbl-host { margin-left: 86px; }
.lbl-port { margin-left: 34px; }
.lbl-ws { margin-left: 110px; }

.field {
  height: 24px;
  margin-left: 8px;
  border: 1px solid;
  border-color: #999 #eee #eee #999;
  color: #aaa;
  padding-left: 5px;
  line-height: 20px;
}

.f-host { width: 156px; }
.f-port { width: 49px; }
.f-ws { width: 156px; background: #fff; }

.disconnect {
  width: 107px;
  height: 26px;
  margin-left: 6px;
  background: #f0f0f0;
  border: 1px solid;
  border-color: #ccc #555 #555 #ccc;
  text-align: center;
  line-height: 22px;
  color: #333;
}

.term {
  position: relative;
  height: 309px;
  background: #000;
  overflow: hidden;
}

/* stretched so the glyphs keep the wide 3270 look */
.screen {
  margin: 0;
  padding: 1px 0 0 10.800px;
  font-family: "DejaVu Sans Mono", monospace;
  font-size: 13px;
  line-height: 12.830px;
  letter-spacing: 1.710px;
  white-space: pre;
  transform: scaleX(1.2);
  transform-origin: 0 0;
}

.g { color: #35d05a; }
.w { color: #f0f0f0; }
.b { color: #7a82e6; }
.r { color: #e02020; }

.cross-v {
  position: absolute;
  left: 118px;
  top: 0;
  bottom: 0;
  width: 1px;
  background: #1fa23a;
}

.cross-h {
  position: absolute;
  left: 0;
  right: 0;
  top: 26px;
  height: 1px;
  background: #1fa23a;
}

.oia {
  height: 19px;
  background: #000;
  border-top: 2px solid #5560cc;
  border-bottom: 3px solid #888;
  display: flex;
  align-items: center;
  font-family: "DejaVu Sans Mono", monospace;
  font-size: 13px;
  letter-spacing: 3.620px;
  color: #7a82e6;
  padding-left: 1px;
}

.ma {
  position: relative;
  width: 37px;
}

.ma i {
  position: absolute;
  left: 19px;
  top: -1px;
  width: 18px;
  height: 15px;
  background: #7f8bea;
}

.ma u {
  position: relative;
  z-index: 1;
}

.oia-a { margin-left: 34px; }
.oia-mw { margin-left: 213px; }

.oia-pos {
  margin-left: auto;
  color: #f0f0f0;
}

.log {
  flex: 1 1 0;
  min-height: 0;
  background: #fff;
  display: flex;
  border-bottom: 1px solid #999;
  overflow: hidden;
}

.log-text {
  flex: 1;
  padding: 1px 0 0 3px;
  font-family: "Liberation Sans", sans-serif;
  font-weight: 700;
  font-size: 14px;
  line-height: 17px;
  color: #111;
}

.log-scroll {
  width: 17px;
  display: flex;
  flex-direction: column;
  align-items: center;
  padding: 5px 0;
  background: #f4f4f4;
}

.log-scroll i {
  display: block;
  width: 15px;
  height: 20px;
  background: #cdcdcd;
  margin: 8px 0 auto;
}

.s-status {
  height: 22px;
  background: #f0f0f0;
  display: flex;
  align-items: center;
  padding-left: 1px;
  font-size: 12px;
  color: #333;
}

.st-msg {
  width: 624px;
  padding-left: 4px;
  margin-left: 4px;
  border-left: 1px solid #ccc;
}

.st-print {
  padding-left: 3px;
  border-left: 1px solid #ccc;
}

.grip-r {
  margin-left: auto;
  margin-right: 2px;
}

/* meeting controls */
.meeting {
  height: 76px;
  background: #111;
  position: relative;
  display: flex;
  align-items: center;
  color: #f0f0f0;
}

.cc {
  margin-left: 39px;
}

.controls {
  position: absolute;
  left: 584px;
  top: 14px;
  display: flex;
  gap: 16px;
}

.pill {
  height: 49px;
  border: 1px solid #555;
  border-radius: 25px;
  background: none;
  color: #f0f0f0;
  font: 500 19px "Inter", "Open Sans", sans-serif;
  display: flex;
  align-items: center;
  padding: 0;
}

.unmute {
  width: 162px;
  padding-left: 16px;
  gap: 8px;
}

.video {
  width: 189px;
  padding-left: 16px;
  gap: 8px;
  color: #777;
}

.drop {
  margin-left: auto;
  margin-right: 10px;
}

.share {
  width: 115px;
  padding-left: 13px;
  gap: 11px;
}

.react {
  width: 103px;
  justify-content: space-between;
  padding: 0 13px;
}

.divider {
  width: 1px;
  height: 32px;
  background: #333;
}

.more {
  width: 49px;
  justify-content: center;
  font-size: 14px;
}

.hangup {
  width: 49px;
  height: 49px;
  border: 0;
  border-radius: 50%;
  background: #dd2233;
  display: flex;
  align-items: center;
  justify-content: center;
}

.side-btns {
  margin-left: auto;
  display: flex;
  align-items: center;
  font: 500 18.500px "Inter", "Open Sans", sans-serif;
  padding-right: 38px;
}

.side {
  display: flex;
  align-items: center;
  gap: 7px;
}

.chat {
  margin-left: 50px;
  gap: 9px;
}

.more-dots {
  margin-left: 50px;
  font-size: 13px;
}
```
